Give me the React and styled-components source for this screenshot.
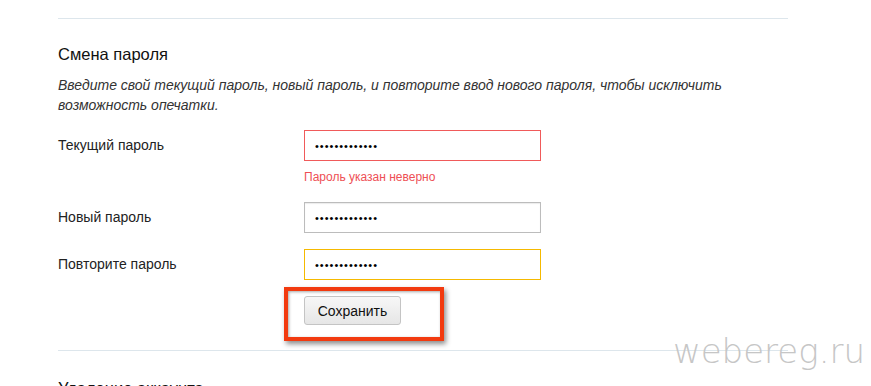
import React from "react";
import styled, { createGlobalStyle } from "styled-components";

const GlobalStyle = createGlobalStyle`
  body {
    margin: 0;
    background: #fff;
    font-family: "Liberation Sans", Arial, sans-serif;
    color: #222;
  }
`;

const Page = styled.div`
  position: relative;
  width: 871px;
  height: 386px;
  overflow: hidden;
  padding: 18px 0 0 58px;
  box-sizing: border-box;
`;

const Divider = styled.hr`
  width: 730px;
  margin: 0;
  border: 0;
  border-top: 1px solid #dde6ec;
`;

const Section = styled.section`
  padding-top: ${(p) => p.top || 24}px;
`;

const Title = styled.h2`
  margin: 0;
  font-size: 16.5px;
  font-weight: normal;
  line-height: 22px;
  color: #111;
`;

const Hint = styled.p`
  margin: 10px 0 15px;
  width: 720px;
  font-size: 14px;
  line-height: 20px;
  font-style: italic;
  color: #333;
`;

const Form = styled.div`
  display: grid;
  grid-template-columns: 246px 237px;
  row-gap: 16px;
`;

const Label = styled.label`
  font-size: 14px;
  line-height: 31px;
  color: #222;
`;

const Field = styled.div`
  display: flex;
  flex-direction: column;
`;

const Input = styled.input`
  box-sizing: border-box;
  width: 237px;
  height: 31px;
  padding: 0 10px;
  margin: 0;
  font-family: "Liberation Sans", Arial, sans-serif;
  font-size: 11px;
  letter-spacing: 1px;
  color: #000;
  background: #fff;
  outline: none;
  border: 1px solid ${(p) => p.tone || "#bcbcbc"};
  box-shadow: ${(p) => (p.tone ? "none" : "inset 0 1px 1px rgba(0,0,0,0.08)")};
`;

const Error = styled.div`
  margin: 9px 0 2px;
  font-size: 12px;
  line-height: 14px;
  color: #ee4f55;
`;

const Actions = styled.div`
  grid-column: 2;
  position: relative;
`;

const Button = styled.button`
  width: 97px;
  height: 29px;
  padding: 0;
  font-family: "Liberation Sans", Arial, sans-serif;
  font-size: 14px;
  color: #111;
  border: 1px solid #c4c4c4;
  border-radius: 3px;
  background: linear-gradient(#f7f7f7, #e6e6e6);
  cursor: pointer;
`;

const Highlight = styled.div`
  position: absolute;
  left: -20px;
  top: -9px;
  width: 160px;
  height: 54px;
  box-sizing: border-box;
  border: 4px solid #f23a0f;
  box-shadow: 2px 3px 5px rgba(0, 0, 0, 0.45),
    inset 1px 1px 3px rgba(0, 0, 0, 0.35);
  pointer-events: none;
`;

const Watermark = styled.div`
  position: absolute;
  right: 6px;
  top: 334px;
  font-family: "DejaVu Sans", "Liberation Sans", sans-serif;
  font-weight: 200;
  font-size: 34px;
  line-height: 34px;
  color: #c6c6c6;
`;

export default () => {
  const fields = [
    { label: "Текущий пароль", tone: "#f05a5a", error: "Пароль указан неверно" },
    { label: "Новый пароль" },
    { label: "Повторите пароль", tone: "#f5b900" },
  ];

  return (
    <>
      <GlobalStyle />
      <Page>
        <Divider />
        <Section>
          <Title>Смена пароля</Title>
          <Hint>
            Введите свой текущий пароль, новый пароль, и повторите ввод нового
            пароля, чтобы исключить возможность опечатки.
          </Hint>
          <Form>
            {fields.map((f) => (
              <React.Fragment key={f.label}>
                <Label>{f.label}</Label>
                <Field>
                  <Input
                    type="password"
                    readOnly
                    defaultValue="1234567890123"
                    tone={f.tone}
                  />
                  {f.error && <Error>{f.error}</Error>}
                </Field>
              </React.Fragment>
            ))}
            <Actions>
              <Button>Сохранить</Button>
              <Highlight />
            </Actions>
          </Form>
        </Section>
        <Section top={25}>
          <Divider />
          <Section top={26}>
            <Title>Удаление аккаунта</Title>
          </Section>
        </Section>
        <Watermark>webereg.ru</Watermark>
      </Page>
    </>
  );
};
